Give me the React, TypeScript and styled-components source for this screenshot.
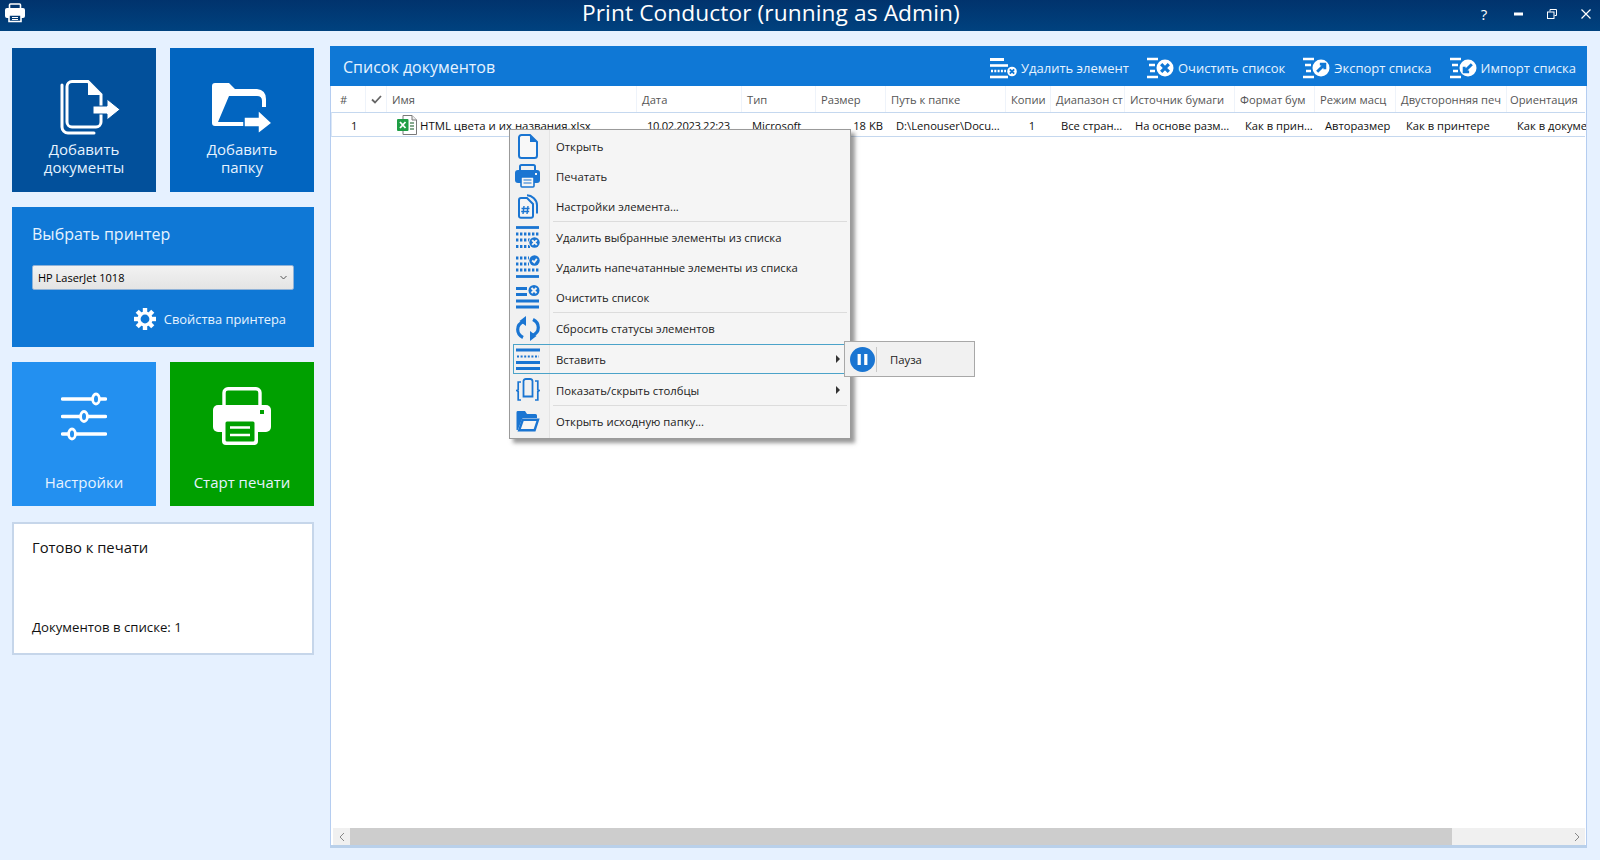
import React from "react";
import styled, { createGlobalStyle } from "styled-components";

const FONT = `"Open Sans", "Noto Sans", "DejaVu Sans", sans-serif`;
const MENU_BLUE = "#1a75d2";

const Global = createGlobalStyle`
  html, body { margin: 0; padding: 0; width: 100%; height: 100%; overflow: hidden; background: #e6f1ff; }
  body { font-family: ${FONT}; }
  * { box-sizing: border-box; }
`;

const Page = styled.div`
  width: 1600px;
  height: 860px;
  display: flex;
  flex-direction: column;
  position: relative;
  background: #e6f1ff;
`;

const TitleBar = styled.header`
  height: 31px;
  flex: none;
  display: grid;
  grid-template-columns: 582px auto 1fr;
  align-items: center;
  color: #fff;
  background: linear-gradient(to bottom, #01336d, #00427f);
`;

const AppIcon = styled.div`
  padding: 0 0 9px 5px;
  display: flex;
`;

const AppTitle = styled.h1`
  margin: 0 0 9px 0;
  font-weight: 400;
  font-size: 22.7px;
  line-height: 26px;
  letter-spacing: 0.1px;
`;

const WinButtons = styled.div`
  display: flex;
  justify-content: flex-end;
  align-items: center;
  gap: 12px;
  height: 31px;
  padding-right: 3px;
`;

const WinButton = styled.div`
  width: 22px;
  height: 22px;
  margin-bottom: 7px;
  display: flex;
  align-items: center;
  justify-content: center;
  font-size: 15px;
  color: #fff;
`;

const Content = styled.main`
  flex: 1;
  display: flex;
  gap: 16px;
  padding: 15px 13px 12px 12px;
  min-height: 0;
`;

const Sidebar = styled.aside`
  width: 302px;
  flex: none;
  padding-top: 2px;
  display: flex;
  flex-direction: column;
`;

const TileRow = styled.div<{ $after: number }>`
  display: flex;
  gap: 14px;
  margin-bottom: ${(p) => p.$after}px;
`;

const Tile = styled.button<{ $bg: string; $top: number; $bottom: number }>`
  width: 144px;
  height: 144px;
  border: 0;
  padding: ${(p) => p.$top}px 0 ${(p) => p.$bottom}px;
  display: flex;
  flex-direction: column;
  align-items: center;
  justify-content: space-between;
  color: #fff;
  background: ${(p) => p.$bg};
  font-family: ${FONT};
`;

const TileIcon = styled.span<{ $shift?: number }>`
  display: flex;
  margin-left: ${(p) => p.$shift ?? 0}px;
`;

const TileLabel = styled.span`
  font-size: 15px;
  line-height: 18px;
  text-align: center;
  color: #e6f3ff;
  display: block;
`;

const PrinterPanel = styled.section`
  height: 140px;
  margin-bottom: 15px;
  padding: 16px 20px 0;
  background: #0f78d6;
  color: #e6f3ff;
  display: flex;
  flex-direction: column;
`;

const PanelTitle = styled.h2`
  margin: 0;
  font-weight: 400;
  font-size: 16px;
  line-height: 22px;
`;

const PrinterSelect = styled.div`
  margin-top: 20px;
  height: 25px;
  padding: 0 6px 0 5px;
  border: 1px solid #8fb2d8;
  border-radius: 2px;
  display: flex;
  align-items: center;
  justify-content: space-between;
  color: #000;
  font-size: 11px;
  background: linear-gradient(to bottom, #f2f2f2, #e4e4e4);
`;

const PropsLink = styled.div`
  margin-top: 18px;
  padding-right: 8px;
  display: flex;
  justify-content: flex-end;
  align-items: center;
  gap: 8px;
  font-size: 12.9px;
  line-height: 22px;
  color: #e6f3ff;
`;

const StatusBox = styled.section`
  height: 133px;
  margin-top: 2px;
  padding: 12px 18px 0;
  background: #fff;
  border: 2px solid #c6d6ea;
  display: flex;
  flex-direction: column;
  color: #111;
`;

const StatusTitle = styled.div`
  font-size: 14.8px;
  line-height: 22px;
`;

const StatusCount = styled.div`
  margin-top: 59px;
  font-size: 13.2px;
  line-height: 20px;
`;

const ListPanel = styled.section`
  flex: 1;
  min-width: 0;
  display: flex;
  flex-direction: column;
  background: #fff;
  border: 1px solid #b5cdf0;
  border-top: 0;
  border-bottom: 3px solid #b9d0ea;
`;

const ListHeader = styled.div`
  height: 40px;
  flex: none;
  margin: 0 -1px;
  padding: 0 11px 0 13px;
  display: flex;
  align-items: center;
  justify-content: space-between;
  background: #0f78d6;
  color: #e6f3ff;
`;

const ListTitle = styled.h2`
  margin: 2px 0 0;
  font-weight: 400;
  font-size: 16px;
  line-height: 22px;
`;

const Toolbar = styled.div`
  display: flex;
  gap: 18px;
`;

const ToolButton = styled.div`
  display: flex;
  align-items: center;
  gap: 4px;
  font-size: 13px;
  line-height: 22px;
  margin-top: 3px;
`;

const COLUMNS = "35px 21px 250px 105px 74px 70px 120px 45px 74px 110px 80px 81px 111px 90px";

const TableArea = styled.div`
  flex: 1;
  min-height: 0;
  overflow: hidden;
`;

const HeaderRow = styled.div`
  display: grid;
  grid-template-columns: ${COLUMNS};
  height: 26px;
`;

const HeaderCell = styled.div<{ $pad?: number }>`
  padding-left: ${(p) => p.$pad ?? 5}px;
  display: flex;
  align-items: center;
  font-size: 11.2px;
  color: #555;
  white-space: nowrap;
  overflow: hidden;
  border-right: 1px solid #eef3fa;
`;

const DataRow = styled.div`
  display: grid;
  grid-template-columns: ${COLUMNS};
  height: 25px;
  border-top: 1px solid #c5d8ef;
  border-bottom: 1px solid #c5d8ef;
  margin-right: 1px;
  border-left: 1px solid #dbe7f6;
`;

const Cell = styled.div`
  padding: 2px 0 0 9px;
  display: flex;
  align-items: center;
  font-size: 11.2px;
  color: #111;
  white-space: nowrap;
  overflow: hidden;
`;

const IndexCell = styled(Cell)`
  padding-left: 19px;
`;

const NameCell = styled(Cell)`
  padding-left: 9px;
  gap: 3px;
  font-size: 11.4px;
`;

const DateCell = styled(Cell)`
  letter-spacing: -0.35px;
`;

const SizeCell = styled(Cell)`
  padding: 2px 4px 0 0;
  justify-content: flex-end;
`;

const CopiesCell = styled(Cell)`
  padding: 2px 0 0 5px;
  justify-content: center;
`;

const ScrollBar = styled.div`
  height: 17px;
  flex: none;
  margin: 0 1px 0 2px;
  display: flex;
  align-items: center;
  background: #f0f0f0;
`;

const ScrollArrow = styled.div`
  width: 17px;
  height: 17px;
  flex: none;
  display: flex;
  align-items: center;
  justify-content: center;
`;

const ScrollThumb = styled.div`
  width: 1102px;
  height: 17px;
  background: #cdcdcd;
`;

const ScrollTrack = styled.div`
  flex: 1;
`;

const Menu = styled.nav`
  position: absolute;
  left: 509px;
  top: 129px;
  width: 342px;
  height: 310px;
  padding: 1px 0 0;
  border: 1px solid #9a9a9a;
  box-shadow: 4px 4px 4px rgba(70, 70, 70, 0.55);
  background: linear-gradient(to right, #f1f1f1 39px, #e4e4e4 39px, #e4e4e4 40px, #f5f5f5 40px);
`;

const MenuRow = styled.div<{ $active?: boolean; $before?: number }>`
  position: relative;
  height: 30px;
  margin-top: ${(p) => p.$before ?? 0}px;
  display: flex;
  align-items: center;
  font-size: 11.3px;
  color: #222;
  &::after {
    content: "";
    display: ${(p) => (p.$active ? "block" : "none")};
    position: absolute;
    left: 3px;
    right: 5px;
    top: 0;
    bottom: 0;
    border: 1px solid #4ba3c9;
  }
`;

const MenuIconSlot = styled.span`
  width: 39px;
  flex: none;
  padding-right: 4px;
  display: flex;
  justify-content: center;
  align-items: center;
`;

const MenuText = styled.span`
  padding-left: 7px;
  flex: 1;
`;

const MenuCaret = styled.span`
  width: 0;
  height: 0;
  margin-right: 10px;
  border-left: 4px solid #333;
  border-top: 4px solid transparent;
  border-bottom: 4px solid transparent;
`;

const MenuDivider = styled.div`
  height: 1px;
  margin: 0 3px 0 43px;
  background: #dcdcdc;
`;

const SubMenu = styled.div`
  position: absolute;
  left: 334px;
  top: 211px;
  width: 131px;
  height: 36px;
  display: flex;
  align-items: center;
  border: 1px solid #a8a8a8;
  background: #f1f1f1;
  font-size: 11.3px;
  color: #222;
  z-index: 2;
`;

const SubIcon = styled.span`
  width: 32px;
  height: 25px;
  margin-right: 13px;
  padding-left: 5px;
  display: flex;
  align-items: center;
  border-right: 1px solid #c8c8c8;
`;

type IP = { c?: string };

const AddDocsIcon = ({ bg }: { bg: string }) => (
  <svg width="60" height="56" viewBox="0 0 60 56">
    <path d="M2 5V47a6 6 0 0 0 6 6H34" fill="none" stroke="#fff" strokeWidth="3" strokeLinecap="round" />
    <path d="M12 1.5H28L41 14.5V42a5 5 0 0 1-5 5H12a5 5 0 0 1-5-5V6.5a5 5 0 0 1 5-5Z" fill="none" stroke="#fff" strokeWidth="3" />
    <path d="M28 1V15H41Z" fill="#fff" />
    <path d="M33 26H47V19L60 29.5 47 40V34H33Z" fill="#fff" stroke={bg} strokeWidth="1" />
  </svg>
);

const AddFolderIcon = ({ bg }: { bg: string }) => (
  <svg width="60" height="56" viewBox="0 0 60 56">
    <path d="M3 1H17L23 7H45Q54 8 54 17V25H50V19Q50 14 45 14H17L6 40H34V44H3Q0 44 0 41V4Q0 1 3 1Z" fill="#fff" />
    <path d="M32 35H46V28L60 41 46 52V45H32Z" fill="#fff" stroke={bg} strokeWidth="1.5" />
  </svg>
);

const SlidersIcon = ({ bg }: { bg: string }) => (
  <svg width="46" height="50" viewBox="0 0 46 50">
    {[[0, 35], [17.5, 23], [35, 11]].map(([y, x]) => (
      <g key={y}>
        <path d={`M1.5 ${y + 7}H44.5`} stroke="#fff" strokeWidth="3.4" strokeLinecap="round" />
        <ellipse cx={x} cy={y + 7} rx="3.4" ry="5" fill={bg} stroke="#fff" strokeWidth="2.8" />
      </g>
    ))}
  </svg>
);

const BigPrinterIcon = ({ bg }: { bg: string }) => (
  <svg width="58" height="58" viewBox="0 0 58 58">
    <rect x="11" y="1.7" width="36" height="26" rx="4" fill="none" stroke="#fff" strokeWidth="3.4" />
    <rect x="0" y="18" width="58" height="27" rx="5" fill="#fff" />
    <rect x="9" y="31" width="36" height="27" rx="4" fill="#fff" />
    <rect x="12.5" y="34.5" width="29" height="20" rx="1.5" fill={bg} />
    <path d="M17 40.5H37M17 48H37" stroke="#fff" strokeWidth="2.6" />
    <rect x="47" y="23" width="4" height="4" fill={bg} />
  </svg>
);

const SmallPrinter = ({ c = "#fff" }: IP) => (
  <svg width="20" height="20" viewBox="0 0 20 20">
    <path d="M4.5 7V2a1 1 0 0 1 1-1h9a1 1 0 0 1 1 1v5" fill="none" stroke={c} strokeWidth="1.6" />
    <rect x="0" y="5" width="20" height="10" rx="2" fill={c} />
    <path d="M4 12H16V18.5H4Z" fill="#013a74" stroke={c} strokeWidth="1.6" />
    <path d="M7 14.5H13M7 16.5H13" stroke={c} strokeWidth="1" />
  </svg>
);

const GearIcon = () => (
  <svg width="22" height="22" viewBox="0 0 22 22">
    {[0, 45, 90, 135, 180, 225, 270, 315].map((a) => (
      <rect key={a} x="8.8" y="0" width="4.4" height="5" fill="#fff" transform={`rotate(${a} 11 11)`} />
    ))}
    <circle cx="11" cy="11" r="6" fill="none" stroke="#fff" strokeWidth="3.2" />
  </svg>
);

const ChevronDown = () => (
  <svg width="7" height="5" viewBox="0 0 7 5">
    <path d="M.5 1L3.5 4 6.5 1" fill="none" stroke="#555" strokeWidth="1" />
  </svg>
);

const ExcelIcon = () => (
  <svg width="20" height="20" viewBox="0 0 20 20" style={{ flex: "none", marginTop: -2 }}>
    <path d="M6 .5H15L19.5 5V19.5H6Z" fill="#fff" stroke="#7a7a7a" />
    <path d="M15 .5V5H19.5" fill="#eee" stroke="#7a7a7a" />
    <path d="M13 8H17M13 11H17M13 14H17" stroke="#5f8f6a" strokeWidth="1.4" />
    <rect x="0" y="4" width="11.5" height="12" rx="1" fill="#1f9e45" />
    <path d="M3 7L8.5 13M8.5 7L3 13" stroke="#fff" strokeWidth="1.8" />
  </svg>
);

const Badge = ({ kind, cx, cy, r, fg, bg }: { kind: string; cx: number; cy: number; r: number; fg: string; bg: string }) => {
  const k = r * 0.45;
  return (
    <g>
      <circle cx={cx} cy={cy} r={r + 0.8} fill={bg} />
      <circle cx={cx} cy={cy} r={r} fill={fg} />
      {kind === "x" && (
        <path d={`M${cx - k} ${cy - k}L${cx + k} ${cy + k}M${cx + k} ${cy - k}L${cx - k} ${cy + k}`} stroke={bg} strokeWidth={r * 0.38} />
      )}
      {kind === "check" && (
        <path d={`M${cx - k} ${cy}L${cx - k * 0.1} ${cy + k * 0.8}L${cx + k} ${cy - k * 0.7}`} fill="none" stroke={bg} strokeWidth={r * 0.34} />
      )}
      {kind === "out" && (
        <path d={`M${cx - k} ${cy + k}L${cx + k * 0.8} ${cy - k * 0.8}M${cx - k * 0.3} ${cy - k}H${cx + k}V${cy + k * 0.3}`} fill="none" stroke={bg} strokeWidth={r * 0.34} />
      )}
      {kind === "in" && (
        <path d={`M${cx + k} ${cy - k}L${cx - k * 0.8} ${cy + k * 0.8}M${cx + k * 0.3} ${cy + k}H${cx - k}V${cy - k * 0.3}`} fill="none" stroke={bg} strokeWidth={r * 0.34} />
      )}
    </g>
  );
};

const ToolDelete = () => (
  <svg width="27" height="24" viewBox="0 0 27 24">
    <path d="M0 3.5H14" stroke="#fff" strokeWidth="3" />
    <path d="M0 9.5H18" stroke="#fff" strokeWidth="2.6" />
    <path d="M1 15H16" stroke="#fff" strokeWidth="2.4" strokeDasharray="2 1.3" />
    <path d="M0 21H18" stroke="#fff" strokeWidth="2.6" />
    <Badge kind="x" cx={22} cy={15.5} r={4.8} fg="#fff" bg="#0f78d6" />
  </svg>
);

const ToolList = ({ kind }: { kind: string }) => (
  <svg width="27" height="24" viewBox="0 0 27 24">
    <path d="M0 3H11M2 9H8M3 15H8M0 21H11" stroke="#fff" strokeWidth="2.4" />
    <Badge kind={kind} cx={18} cy={12} r={8.5} fg="#fff" bg="#0f78d6" />
  </svg>
);

const MDoc = () => (
  <svg width="20" height="25" viewBox="0 0 20 25">
    <path d="M3.5 1H12L19 8V21.5a2.5 2.5 0 0 1-2.5 2.5H3.5A2.5 2.5 0 0 1 1 21.5V3.5A2.5 2.5 0 0 1 3.5 1Z" fill="#f8f8f8" stroke={MENU_BLUE} strokeWidth="2" />
    <path d="M12 1V8H19Z" fill={MENU_BLUE} />
  </svg>
);

const MPrint = () => (
  <svg width="25" height="24" viewBox="0 0 25 24">
    <path d="M5 8V2.5A1.5 1.5 0 0 1 6.5 1h12A1.5 1.5 0 0 1 20 2.5V8" fill="none" stroke={MENU_BLUE} strokeWidth="2" />
    <rect x="0" y="6" width="25" height="13" rx="3" fill={MENU_BLUE} />
    <rect x="6" y="13" width="13" height="10" rx="1" fill="#f5f5f5" stroke={MENU_BLUE} strokeWidth="1.6" />
    <path d="M8.5 16H16.5M8.5 19H16.5" stroke={MENU_BLUE} strokeWidth="1.2" />
    <rect x="20" y="9" width="2" height="2" fill="#f5f5f5" />
  </svg>
);

const MSettings = () => (
  <svg width="20" height="25" viewBox="0 0 20 25">
    <path d="M9 1.2C14 1.2 19 6 19 11V19.5" fill="none" stroke={MENU_BLUE} strokeWidth="2" />
    <path d="M3 4H9L15 10V22a1.8 1.8 0 0 1-1.8 1.8H3A1.8 1.8 0 0 1 1 22V6A2 2 0 0 1 3 4Z" fill="#f5f5f5" stroke={MENU_BLUE} strokeWidth="2" />
    <path d="M6 12L5 20M10 12L9 20M3.5 14.5H11.5M3.2 17.5H11.2" stroke={MENU_BLUE} strokeWidth="1.4" />
  </svg>
);

const MListX = () => (
  <svg width="24" height="24" viewBox="0 0 24 24">
    <path d="M0 2.5H23" stroke={MENU_BLUE} strokeWidth="2.8" />
    <path d="M0 9H23" stroke={MENU_BLUE} strokeWidth="2.8" strokeDasharray="2.4 1.6" />
    <path d="M0 15H14M0 21.5H14" stroke={MENU_BLUE} strokeWidth="2.8" strokeDasharray="2.4 1.6" />
    <Badge kind="x" cx={18.5} cy={17.5} r={5.2} fg={MENU_BLUE} bg="#f1f1f1" />
  </svg>
);

const MListCheck = () => (
  <svg width="24" height="24" viewBox="0 0 24 24">
    <path d="M0 3H13M0 9H13" stroke={MENU_BLUE} strokeWidth="2.8" strokeDasharray="2.4 1.6" />
    <path d="M0 15H23" stroke={MENU_BLUE} strokeWidth="2.8" strokeDasharray="2.4 1.6" />
    <path d="M0 21.5H23" stroke={MENU_BLUE} strokeWidth="2.8" />
    <Badge kind="check" cx={18.5} cy={5.5} r={5.2} fg={MENU_BLUE} bg="#f1f1f1" />
  </svg>
);

const MClear = () => (
  <svg width="24" height="24" viewBox="0 0 24 24">
    <path d="M0 3.5H11M0 9.5H11M0 16H23M0 22H23" stroke={MENU_BLUE} strokeWidth="2.8" />
    <Badge kind="x" cx={18} cy={5.5} r={5.5} fg={MENU_BLUE} bg="#f1f1f1" />
  </svg>
);

const MReset = () => (
  <svg width="24" height="25" viewBox="0 0 24 25">
    <path d="M8 5.5C3.5 7 1.7 10 1.7 13.5C1.7 17 3.5 19.8 7 21.5" fill="none" stroke={MENU_BLUE} strokeWidth="3.2" />
    <path d="M16 19.5C20.5 18 22.3 15 22.3 11.5C22.3 8 20.5 5.2 17 3.5" fill="none" stroke={MENU_BLUE} strokeWidth="3.2" />
    <path d="M10 0V10L3.5 5Z" fill={MENU_BLUE} />
    <path d="M14 25V15L20.5 20Z" fill={MENU_BLUE} />
  </svg>
);

const MInsert = () => (
  <svg width="24" height="24" viewBox="0 0 24 24">
    <path d="M0 3H24M0 15.5H24M0 21.5H24" stroke={MENU_BLUE} strokeWidth="2.8" />
    <path d="M1 9.5H23" stroke={MENU_BLUE} strokeWidth="2" strokeDasharray="2 1.6" />
  </svg>
);

const MColumns = () => (
  <svg width="24" height="24" viewBox="0 0 24 24">
    <path d="M5 4H2.2V11.5L.8 12.5 2.2 13.5V22H5M19 3H21.8V11.5L23.2 12.5 21.8 13.5V22H19" fill="none" stroke={MENU_BLUE} strokeWidth="1.7" />
    <path d="M7.5 7V3A2.5 2.5 0 0 1 10 1H14A2.5 2.5 0 0 1 16.5 3V18.5H7.5Z" fill="none" stroke={MENU_BLUE} strokeWidth="1.8" />
  </svg>
);

const MFolder = () => (
  <svg width="24" height="21" viewBox="0 0 24 21">
    <path d="M1.5 0H9L11 3H19.5A1.5 1.5 0 0 1 21 4.5V7H6.5L1.8 19H.5V1.5A1.5 1.5 0 0 1 1.5 0Z" fill={MENU_BLUE} />
    <path d="M6.8 8.8H22L18.6 19.2H3.2Z" fill="#f5f5f5" stroke={MENU_BLUE} strokeWidth="2.4" />
  </svg>
);

const PauseIcon = () => (
  <svg width="25" height="25" viewBox="0 0 25 25">
    <circle cx="12.5" cy="12.5" r="12.5" fill={MENU_BLUE} />
    <rect x="7.6" y="7" width="3.2" height="11" fill="#fff" />
    <rect x="14.2" y="7" width="3.2" height="11" fill="#fff" />
  </svg>
);

const HEADERS = ["Путь к папке", "Копии", "Диапазон ст", "Источник бумаги", "Формат бум", "Режим масц", "Двусторонняя печ"];

const Check = () => (
  <svg width="11" height="9" viewBox="0 0 11 9">
    <path d="M1 4.5L4 7.5 10 1" fill="none" stroke="#666" strokeWidth="1.8" />
  </svg>
);

const TILE_DARK = "#02509b";
const TILE_MID = "#0265c0";
const TILE_LIGHT = "#2390f0";
const TILE_GREEN = "#00a000";

export default function App() {
  return (
    <Page>
      <Global />
      <TitleBar>
        <AppIcon>
          <SmallPrinter />
        </AppIcon>
        <AppTitle>Print Conductor (running as Admin)</AppTitle>
        <WinButtons>
          <WinButton>?</WinButton>
          <WinButton>
            <svg width="9" height="4" viewBox="0 0 9 4"><rect width="9" height="3" y="0.5" fill="#fff" /></svg>
          </WinButton>
          <WinButton>
            <svg width="10" height="10" viewBox="0 0 10 10">
              <path d="M3 2.5V.5H9.5V6.5H7.5" fill="none" stroke="#fff" />
              <rect x=".5" y="3" width="6.5" height="6.5" fill="none" stroke="#fff" />
            </svg>
          </WinButton>
          <WinButton>
            <svg width="10" height="10" viewBox="0 0 10 10"><path d="M.5 .5L9.5 9.5M9.5 .5L.5 9.5" stroke="#fff" strokeWidth="1.2" /></svg>
          </WinButton>
        </WinButtons>
      </TitleBar>

      <Content>
        <Sidebar>
          <TileRow $after={15}>
            <Tile $bg={TILE_DARK} $top={32} $bottom={16}>
              <TileIcon $shift={12}><AddDocsIcon bg={TILE_DARK} /></TileIcon>
              <TileLabel>Добавить<br />документы</TileLabel>
            </Tile>
            <Tile $bg={TILE_MID} $top={34} $bottom={16}>
              <TileIcon><AddFolderIcon bg={TILE_MID} /></TileIcon>
              <TileLabel>Добавить<br />папку</TileLabel>
            </Tile>
          </TileRow>

          <PrinterPanel>
            <PanelTitle>Выбрать принтер</PanelTitle>
            <PrinterSelect>
              HP LaserJet 1018
              <ChevronDown />
            </PrinterSelect>
            <PropsLink>
              <GearIcon />
              Свойства принтера
            </PropsLink>
          </PrinterPanel>

          <TileRow $after={14}>
            <Tile $bg={TILE_LIGHT} $top={30} $bottom={15}>
              <TileIcon><SlidersIcon bg={TILE_LIGHT} /></TileIcon>
              <TileLabel>Настройки</TileLabel>
            </Tile>
            <Tile $bg={TILE_GREEN} $top={25} $bottom={15}>
              <TileIcon><BigPrinterIcon bg={TILE_GREEN} /></TileIcon>
              <TileLabel>Старт печати</TileLabel>
            </Tile>
          </TileRow>

          <StatusBox>
            <StatusTitle>Готово к печати</StatusTitle>
            <StatusCount>Документов в списке: 1</StatusCount>
          </StatusBox>
        </Sidebar>

        <ListPanel>
          <ListHeader>
            <ListTitle>Список документов</ListTitle>
            <Toolbar>
              <ToolButton><ToolDelete />Удалить элемент</ToolButton>
              <ToolButton><ToolList kind="x" />Очистить список</ToolButton>
              <ToolButton><ToolList kind="out" />Экспорт списка</ToolButton>
              <ToolButton><ToolList kind="in" />Импорт списка</ToolButton>
            </Toolbar>
          </ListHeader>

          <TableArea>
            <HeaderRow>
              <HeaderCell $pad={9}>#</HeaderCell>
              <HeaderCell $pad={5}><Check /></HeaderCell>
              <HeaderCell>Имя</HeaderCell>
              <HeaderCell>Дата</HeaderCell>
              <HeaderCell>Тип</HeaderCell>
              <HeaderCell>Размер</HeaderCell>
              {HEADERS.map((h) => (
                <HeaderCell key={h}>{h}</HeaderCell>
              ))}
              <HeaderCell $pad={3}>Ориентация</HeaderCell>
            </HeaderRow>
            <DataRow>
              <IndexCell>1</IndexCell>
              <Cell />
              <NameCell><ExcelIcon />HTML цвета и их названия.xlsx</NameCell>
              <DateCell>10.02.2023 22:23</DateCell>
              <Cell>Microsoft</Cell>
              <SizeCell>18 KB</SizeCell>
              <Cell>D:\Lenouser\Docu…</Cell>
              <CopiesCell>1</CopiesCell>
              <Cell>Все стран…</Cell>
              <Cell>На основе разм…</Cell>
              <Cell>Как в прин…</Cell>
              <Cell>Авторазмер</Cell>
              <Cell>Как в принтере</Cell>
              <Cell>Как в докуме</Cell>
            </DataRow>
          </TableArea>

          <ScrollBar>
            <ScrollArrow>
              <svg width="6" height="10" viewBox="0 0 6 10"><path d="M5 1L1 5 5 9" fill="none" stroke="#888" /></svg>
            </ScrollArrow>
            <ScrollThumb />
            <ScrollTrack />
            <ScrollArrow>
              <svg width="6" height="10" viewBox="0 0 6 10"><path d="M1 1L5 5 1 9" fill="none" stroke="#888" /></svg>
            </ScrollArrow>
          </ScrollBar>
        </ListPanel>
      </Content>

      <Menu>
        <MenuRow><MenuIconSlot><MDoc /></MenuIconSlot><MenuText>Открыть</MenuText></MenuRow>
        <MenuRow><MenuIconSlot><MPrint /></MenuIconSlot><MenuText>Печатать</MenuText></MenuRow>
        <MenuRow><MenuIconSlot><MSettings /></MenuIconSlot><MenuText>Настройки элемента...</MenuText></MenuRow>
        <MenuDivider />
        <MenuRow><MenuIconSlot><MListX /></MenuIconSlot><MenuText>Удалить выбранные элементы из списка</MenuText></MenuRow>
        <MenuRow><MenuIconSlot><MListCheck /></MenuIconSlot><MenuText>Удалить напечатанные элементы из списка</MenuText></MenuRow>
        <MenuRow><MenuIconSlot><MClear /></MenuIconSlot><MenuText>Очистить список</MenuText></MenuRow>
        <MenuDivider />
        <MenuRow><MenuIconSlot><MReset /></MenuIconSlot><MenuText>Сбросить статусы элементов</MenuText></MenuRow>
        <MenuRow $active $before={1}><MenuIconSlot><MInsert /></MenuIconSlot><MenuText>Вставить</MenuText><MenuCaret /></MenuRow>
        <MenuRow $before={1}><MenuIconSlot><MColumns /></MenuIconSlot><MenuText>Показать/скрыть столбцы</MenuText><MenuCaret /></MenuRow>
        <MenuDivider />
        <MenuRow><MenuIconSlot><MFolder /></MenuIconSlot><MenuText>Открыть исходную папку...</MenuText></MenuRow>
        <SubMenu>
          <SubIcon><PauseIcon /></SubIcon>
          Пауза
        </SubMenu>
      </Menu>
    </Page>
  );
}
